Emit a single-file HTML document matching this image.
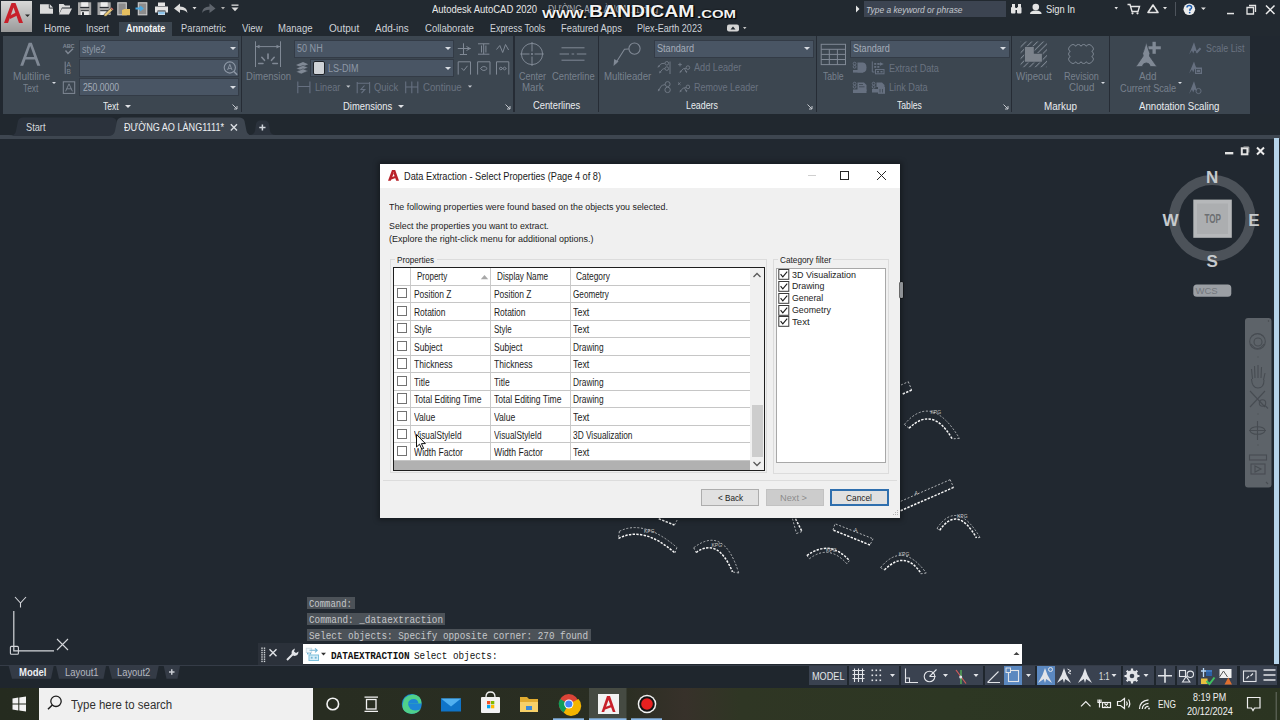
<!DOCTYPE html>
<html><head><meta charset="utf-8">
<style>
*{margin:0;padding:0;box-sizing:border-box}
html,body{width:1280px;height:720px;overflow:hidden;background:#212830;font-family:"Liberation Sans",sans-serif;position:relative}
.a{position:absolute;white-space:nowrap;line-height:1}
.sep{top:36px;width:1.5px;height:76px;background:#262c35}
.pdd{position:absolute;width:0;height:0;border-left:3px solid transparent;border-right:3px solid transparent;border-top:3px solid #e0e2e6}
.combo{position:absolute;height:16px;background:#495564;box-shadow:0 0 0 1px #333b46}
.cdd{position:absolute;width:0;height:0;border-left:3.5px solid transparent;border-right:3.5px solid transparent;border-top:3.5px solid #d8dce2}
.cmdbg{position:absolute;height:12px;background:#4c5258}
.sg{position:absolute;top:666px;height:19px;background:#3a4250}
</style></head><body>
<div class="a" style="left:0;top:0;width:1280px;height:36px;background:#222930"></div><div class="a" style="left:1px;top:1px;width:31px;height:31px;background:linear-gradient(#d8d8d8,#9a9a9a);"></div><svg class="a" style="left:1px;top:1px" width="31" height="31" viewBox="0 0 31 31">
<path d="M3 22 L10.5 2 L14.5 2 L22 22 L18 22 L12.5 6.5 L7 22 Z" fill="#c8202a"/>
<path d="M8 15 L16 11 L17.2 14 L9 18 Z" fill="#c8202a"/>
<path d="M24 13.5 L29 13.5 L26.5 16 Z" fill="#2a2a2a"/>
</svg><svg class="a" style="left:38px;top:1px" width="205" height="16" viewBox="38 1 205 16">
<g fill="#dcdcdc">
<path d="M40 4.2 L49.8 4.2 L53 7.6 L53 13.8 L40 13.8 Z"/><path d="M49.3 4.2 L49.3 8.1 L53 8.1" stroke="#222930" stroke-width="0.9" fill="none"/>
<path d="M59 4 L63.5 4 L65 5.5 L70 5.5 L70 7.5 L62 7.5 L59 14 Z"/><path d="M62 8.5 L72 8.5 L69 14.4 L59 14.4 Z"/>
</g>
<path d="M78 2.3 L91.2 2.3 L91.2 15 L78 15 Z" fill="#a6a6a6"/>
<rect x="81.2" y="2.3" width="7" height="4.6" fill="#ececec"/><rect x="80.2" y="6.9" width="9" height="1.2" fill="#2a2e34"/>
<rect x="80.8" y="11" width="8" height="4" fill="#ececec"/><rect x="80.8" y="10.2" width="8" height="1" fill="#2a2e34"/><rect x="82" y="12.2" width="2" height="2.8" fill="#2a2e34"/>
<path d="M97.5 2.3 L110.7 2.3 L110.7 15 L97.5 15 Z" fill="#a6a6a6"/>
<rect x="100.7" y="2.3" width="7" height="4.6" fill="#ececec"/><rect x="99.7" y="6.9" width="9" height="1.2" fill="#2a2e34"/>
<rect x="100.3" y="11" width="6" height="4" fill="#ececec"/><rect x="100.3" y="10.2" width="8" height="1" fill="#2a2e34"/>
<path d="M104 14.5 L110.5 8.3 L112.6 10.3 L106.2 16.3 L104 16.3 Z" fill="#e8c878" stroke="#222930" stroke-width="0.6"/><path d="M110.5 8.3 L112.6 10.3 L113.5 9.3 L111.4 7.4 Z" fill="#e07a6a"/>
<rect x="117.8" y="2.8" width="8.5" height="12" fill="#8c8c8c" stroke="#d0d0d0" stroke-width="1.1"/>
<path d="M122 10 L124.5 9 L130 9 L130 15.3 L122 15.3 Z" fill="#e6c060"/>
<rect x="138.3" y="2.8" width="8.5" height="12" fill="#8c8c8c" stroke="#d0d0d0" stroke-width="1.1"/>
<path d="M135.5 8.5 L142 8.5 M140 6.5 L142.5 8.5 L140 10.5" stroke="#4aa8e0" stroke-width="1.8" fill="none"/>
<path d="M158 2.5 L165 2.5 L165 6 L158 6 Z M155 6.5 L168 6.5 L168 12.5 L165.5 12.5 L165.5 10.5 L157.5 10.5 L157.5 12.5 L155 12.5 Z M158 11.5 L165 11.5 L165 15 L158 15 Z" fill="#e4e4e4"/><rect x="158.3" y="11.8" width="6.4" height="2.6" fill="#8cc4ec"/>
<path d="M174 8.5 L180 3.5 L180 6.5 Q187 6.5 187.5 13 Q185 9.8 180 9.8 L180 13 Z" fill="#dcdcdc"/>
<path d="M192.5 7 L196.5 7 L194.5 9.5 Z" fill="#dcdcdc"/>
<path d="M215.5 8.5 L209.5 3.5 L209.5 6.5 Q202.5 6.5 202 13 Q204.5 9.8 209.5 9.8 L209.5 13 Z" fill="#5e646c"/>
<path d="M221 7 L225 7 L223 9.5 Z" fill="#b0b0b0"/>
<rect x="231.5" y="4.5" width="7" height="1.3" fill="#dcdcdc"/><path d="M231.5 7.5 L238.5 7.5 L235 11.2 Z" fill="#dcdcdc"/>
</svg><div class="a" style="left:432.00px;top:4.12px;font-size:10.5px;color:#e8e8e8;transform:scaleX(0.9038);transform-origin:0 0;">Autodesk AutoCAD 2020</div>
<div class="a" style="left:548.00px;top:4.12px;font-size:10.5px;color:#a8acb0;transform:scaleX(0.8238);transform-origin:0 0;">ĐƯỜNG AO LÀNG1111.dwg</div>
<div class="a" style="left:541.5px;top:9.2px;font-size:11.5px;font-weight:bold;color:#f2f2f2;text-shadow:0 0 1.5px #000,1px 1px 1px #000;transform:scaleX(1.2811);transform-origin:0 0;">WWW.</div><div class="a" style="left:588.5px;top:4.4px;font-size:16.8px;font-weight:bold;color:#f2f2f2;text-shadow:0 0 1.5px #000,1px 1px 1px #000;transform:scaleX(1.1548);transform-origin:0 0;">BANDICAM</div><div class="a" style="left:696.5px;top:9.2px;font-size:11.5px;font-weight:bold;color:#f2f2f2;text-shadow:0 0 1.5px #000,1px 1px 1px #000;transform:scaleX(1.2986);transform-origin:0 0;">.COM</div><svg class="a" style="left:855px;top:5px" width="6" height="8" viewBox="0 0 6 8"><path d="M1 0.5 L4.5 4 L1 7.5 Z" fill="#e4e4e4"/></svg><div class="a" style="left:864px;top:1px;width:142px;height:16px;background:#3c4451"></div><div class="a" style="left:866.00px;top:4.78px;font-size:9.5px;color:#c4c8ce;font-style:italic;transform:scaleX(0.8843);transform-origin:0 0;">Type a keyword or phrase</div>
<svg class="a" style="left:1005px;top:0px" width="275" height="18" viewBox="1005 0 275 18">
<g fill="#e4e4e4">
<rect x="1011" y="7" width="4.5" height="6.5" rx="1"/><rect x="1017" y="7" width="4.5" height="6.5" rx="1"/><rect x="1012" y="4" width="3" height="4"/><rect x="1018" y="4" width="3" height="4"/><rect x="1014.5" y="8" width="3" height="2"/>
<circle cx="1035.8" cy="7" r="3.3"/><path d="M1030 14 Q1030 10.5 1035.8 10.5 Q1041.6 10.5 1041.6 14 Z"/>
<path d="M1114.5 7 L1118 7 L1116.2 9.5 Z"/>
<path d="M1163 7 L1167 7 L1165 9.5 Z"/>
<path d="M1201 7.5 L1205.8 7.5 L1203.4 10 Z"/>
<rect x="1227" y="12.8" width="7" height="1.5"/>
</g>
<path d="M1127.5 4.5 L1130 4.5 L1132 11.5 L1138 11.5 L1139.5 6.5 L1131 6.5" stroke="#e4e4e4" stroke-width="1.4" fill="none"/>
<circle cx="1132.5" cy="13.3" r="1.1" fill="#e4e4e4"/><circle cx="1137.5" cy="13.3" r="1.1" fill="#e4e4e4"/>
<path d="M1148 12.5 L1153 5 L1158 12.5 Z" stroke="#e4e4e4" stroke-width="1.6" fill="none" stroke-linejoin="round"/>
<rect x="1175" y="2" width="1" height="14" fill="#4e545c"/>
<circle cx="1189.3" cy="9.3" r="5.8" fill="#ececec"/>
<path d="M1187 7.5 Q1187 5.5 1189.3 5.5 Q1191.6 5.5 1191.6 7.4 Q1191.6 8.6 1190 9.3 L1189.8 10.8" stroke="#1f5fb0" stroke-width="1.5" fill="none"/><circle cx="1189.7" cy="12.6" r="0.9" fill="#1f5fb0"/>
<path d="M1247 7.5 L1253.5 7.5 L1253.5 14 L1247 14 Z M1249 5.5 L1255.5 5.5 L1255.5 12" stroke="#e4e4e4" stroke-width="1.3" fill="none"/>
<path d="M1266 5.5 L1274.5 14 M1274.5 5.5 L1266 14" stroke="#ececec" stroke-width="1.5"/>
</svg><div class="a" style="left:1046.30px;top:4.32px;font-size:10.5px;color:#e8e8e8;transform:scaleX(0.8868);transform-origin:0 0;">Sign In</div>
<div class="a" style="left:118.5px;top:21.5px;width:53.5px;height:15px;background:#3c4650"></div><div class="a" style="left:44.00px;top:22.96px;font-size:10.9px;color:#ced2d8;transform:scaleX(0.9049);transform-origin:0 0;">Home</div>
<div class="a" style="left:86.20px;top:22.96px;font-size:10.9px;color:#ced2d8;transform:scaleX(0.8440);transform-origin:0 0;">Insert</div>
<div class="a" style="left:125.60px;top:22.96px;font-size:10.9px;color:#f2f4f6;font-weight:bold;transform:scaleX(0.8347);transform-origin:0 0;">Annotate</div>
<div class="a" style="left:180.70px;top:22.96px;font-size:10.9px;color:#ced2d8;transform:scaleX(0.8546);transform-origin:0 0;">Parametric</div>
<div class="a" style="left:242.00px;top:22.96px;font-size:10.9px;color:#ced2d8;transform:scaleX(0.8753);transform-origin:0 0;">View</div>
<div class="a" style="left:278.40px;top:22.96px;font-size:10.9px;color:#ced2d8;transform:scaleX(0.8765);transform-origin:0 0;">Manage</div>
<div class="a" style="left:328.60px;top:22.96px;font-size:10.9px;color:#ced2d8;transform:scaleX(0.9235);transform-origin:0 0;">Output</div>
<div class="a" style="left:375.00px;top:22.96px;font-size:10.9px;color:#ced2d8;transform:scaleX(0.9124);transform-origin:0 0;">Add-ins</div>
<div class="a" style="left:424.80px;top:22.96px;font-size:10.9px;color:#ced2d8;transform:scaleX(0.8779);transform-origin:0 0;">Collaborate</div>
<div class="a" style="left:489.50px;top:22.96px;font-size:10.9px;color:#ced2d8;transform:scaleX(0.8181);transform-origin:0 0;">Express Tools</div>
<div class="a" style="left:560.60px;top:22.96px;font-size:10.9px;color:#ced2d8;transform:scaleX(0.8596);transform-origin:0 0;">Featured Apps</div>
<div class="a" style="left:637.30px;top:22.96px;font-size:10.9px;color:#ced2d8;transform:scaleX(0.8322);transform-origin:0 0;">Plex-Earth 2023</div>
<svg class="a" style="left:726px;top:22px" width="22" height="12" viewBox="726 22 22 12">
<rect x="727" y="24.5" width="12" height="7" rx="2" fill="#d4d4d4"/><path d="M730.5 29.5 L733 26.5 L735.5 29.5 Z" fill="#222930"/>
<path d="M743 27 L746.5 27 L744.7 29.3 Z" fill="#c4c4c4"/>
</svg><div class="a" style="left:3px;top:36px;width:1247px;height:77.5px;background:#3c4650"></div><div class="a sep" style="left:240.5px"></div><div class="a sep" style="left:513px"></div><div class="a sep" style="left:597.5px"></div><div class="a sep" style="left:815.5px"></div><div class="a sep" style="left:1010.5px"></div><div class="a sep" style="left:1108.5px"></div><svg class="a" style="left:18px;top:41px" width="26" height="28" viewBox="18 41 26 28">
<path d="M20.2 65.7 L28.7 42.8 L31.8 42.8 L40.3 65.7 L37.3 65.7 L35 59.4 L25.5 59.4 L23.2 65.7 Z M26.3 56.9 L34.2 56.9 L30.25 46 Z" fill="#808995"/>
</svg><div class="a" style="left:12.60px;top:71.50px;font-size:10px;color:#78818d;transform:scaleX(1.0112);transform-origin:0 0;">Multiline</div>
<div class="a" style="left:23.40px;top:83.60px;font-size:10px;color:#78818d;transform:scaleX(0.8395);transform-origin:0 0;">Text</div>
<div class="a pdd" style="left:52.3px;top:82.2px;border-left-width:2px;border-right-width:2px;border-top-width:2.5px;border-top-color:#d8dce2"></div><svg class="a" style="left:60px;top:41px" width="18" height="56" viewBox="60 41 18 56">
<text x="62.8" y="47.6" font-family="Liberation Sans" font-weight="bold" font-size="5.6" fill="#808995" textLength="11.8">ABC</text>
<path d="M65.5 50.5 L68 53.5 L73 48.8" stroke="#808995" stroke-width="1.4" fill="none"/>
<path d="M65.2 61.6 L65.2 73.8" stroke="#808995" stroke-width="1"/>
<text x="66.5" y="67.2" font-family="Liberation Sans" font-size="6.6" fill="#808995">A</text>
<text x="66.5" y="73.8" font-family="Liberation Sans" font-size="6.6" fill="#808995">B</text>
<rect x="63.3" y="81.8" width="11.4" height="11.6" fill="none" stroke="#808995" stroke-width="1"/>
<path d="M65.6 91.3 L69 83.8 L72.4 91.3 M66.6 88.8 L71.4 88.8" stroke="#808995" stroke-width="0.9" fill="none"/>
</svg><div class="combo" style="left:80px;top:41px;width:158px"></div><div class="combo" style="left:80px;top:60.2px;width:158px;height:15.8px"></div><div class="combo" style="left:80px;top:79px;width:158px"></div><div class="cdd" style="left:230px;top:47.3px"></div><div class="cdd" style="left:230px;top:85.8px"></div><div class="a" style="left:82.00px;top:44.50px;font-size:10px;color:#8e98a6;transform:scaleX(0.9033);transform-origin:0 0;">style2</div>
<div class="a" style="left:82.50px;top:82.70px;font-size:10px;color:#a4acb8;transform:scaleX(0.8629);transform-origin:0 0;">250.0000</div>
<svg class="a" style="left:222px;top:60px" width="17" height="17" viewBox="222 60 17 17">
<circle cx="229.8" cy="67.5" r="5.6" fill="none" stroke="#8e98a6" stroke-width="1.1"/>
<path d="M233.8 71.5 L237.2 74.8" stroke="#8e98a6" stroke-width="1.6"/>
<path d="M227.6 70 L229.8 64.3 L232 70 M228.3 68.4 L231.3 68.4" stroke="#8e98a6" stroke-width="0.9" fill="none"/>
</svg><div class="a" style="left:103.00px;top:101.60px;font-size:10px;color:#eaecef;transform:scaleX(0.8559);transform-origin:0 0;">Text</div>
<div class="a pdd" style="left:124.5px;top:104.7px;border-left-width:3px;border-right-width:3px;border-top-width:3px"></div><svg class="a" style="left:232px;top:104px" width="6" height="6" viewBox="0 0 6 6"><path d="M0.5 0.5 L5 5 M5 2 L5 5 L2 5" stroke="#c4c8ce" stroke-width="1" fill="none"/></svg><svg class="a" style="left:253px;top:40px" width="30" height="29" viewBox="253 40 30 29">
<g stroke="#808995" stroke-width="1" fill="none"><path d="M255.5 41.3 L255.5 67 M280.5 41.3 L280.5 67 M256 46.6 L280 46.6"/></g>
<g fill="#808995"><path d="M256 46.6 L259.5 44.8 L259.5 48.4 Z M280 46.6 L276.5 44.8 L276.5 48.4 Z"/></g>
<g stroke="#808995" stroke-linecap="round" fill="none">
<path d="M268 54 L268 58.5" stroke-width="1.7"/>
<path d="M261.8 57.3 L264.5 60.3" stroke-width="1.6"/><path d="M274.2 57.3 L271.5 60.3" stroke-width="1.6"/>
<path d="M258.6 63.6 L263 63.6" stroke-width="1.5"/><path d="M272.8 63.6 L277.4 63.6" stroke-width="1.5"/>
</g>
</svg><div class="a" style="left:245.90px;top:71.60px;font-size:10px;color:#78818d;transform:scaleX(0.9545);transform-origin:0 0;">Dimension</div>
<div class="combo" style="left:295px;top:41px;width:158.3px"></div><div class="combo" style="left:310.7px;top:60.1px;width:142.6px;height:15.6px"></div><div class="cdd" style="left:444.5px;top:47.3px"></div><div class="cdd" style="left:444.5px;top:66.5px"></div><div class="a" style="left:297.30px;top:44.40px;font-size:10px;color:#8e98a6;transform:scaleX(0.9062);transform-origin:0 0;">50 NH</div>
<div class="a" style="left:313.3px;top:61.4px;width:12px;height:13.2px;background:#cfd2d6;border:1px solid #1e2228;border-radius:2px"></div><div class="a" style="left:327.50px;top:63.80px;font-size:10px;color:#8e98a6;transform:scaleX(0.9025);transform-origin:0 0;">LS-DIM</div>
<svg class="a" style="left:295px;top:61px" width="14" height="14" viewBox="295 61 14 14">
<g fill="#808995"><path d="M296 65 L303 62 L308.2 64.2 L301.2 67.2 Z"/><path d="M296 68.4 L303 65.4 L308.2 67.6 L301.2 70.6 Z" stroke="#3c4650" stroke-width="0.6"/><path d="M296 71.8 L303 68.8 L308.2 71 L301.2 74 Z" stroke="#3c4650" stroke-width="0.6"/></g>
</svg><svg class="a" style="left:296px;top:80px" width="180" height="16" viewBox="296 80 180 16">
<g stroke="#667080" stroke-width="1.1" fill="none">
<path d="M297.8 81.6 L297.8 93.2 M309.9 81.6 L309.9 93.2 M297.8 86.5 L309.9 86.5"/>
<path d="M357.2 82 L357.2 93.2 M369.6 82 L369.6 93.2 M357.2 83.2 L369.6 83.2"/><path d="M364.5 85.5 L361 89.5 L364.8 89.5 L361.5 93"/>
<path d="M405.7 81.6 L405.7 93.2 M411.8 81.6 L411.8 93.2 M417.8 81.6 L417.8 93.2 M405.7 87 L417.8 87"/>
</g>
<path d="M346.2 85.4 L350.4 85.4 L348.3 87.8 Z M467.9 85.4 L472.1 85.4 L470 87.8 Z" fill="#c4c8ce"/>
</svg><div class="a" style="left:314.80px;top:82.50px;font-size:10px;color:#6a7380;transform:scaleX(0.9133);transform-origin:0 0;">Linear</div>
<div class="a" style="left:373.90px;top:82.50px;font-size:10px;color:#6a7380;transform:scaleX(0.9428);transform-origin:0 0;">Quick</div>
<div class="a" style="left:422.70px;top:82.50px;font-size:10px;color:#6a7380;transform:scaleX(0.9667);transform-origin:0 0;">Continue</div>
<svg class="a" style="left:456px;top:41px" width="56" height="36" viewBox="456 41 56 36">
<g stroke="#808995" stroke-width="1" fill="none">
<path d="M463.5 43.3 L463.5 55 M459.8 54.5 L467 54.5 M457.8 48.5 L470.8 48.5 M466.5 46.5 L470 48.5 L466.5 50.5"/>
<path d="M478 43.8 L489.4 43.8 M478 54.2 L489.4 54.2 M483.7 43.8 L483.7 54.2 M481.5 45.5 L481.5 52.5 M485.9 45.5 L485.9 52.5"/>
<path d="M496.5 49.5 L499.8 45.5 L502.7 52.5 L505.5 44.5 L508.6 50"/>
<path d="M458.2 74.6 L458.2 61.8 L470.5 61.8 L470.5 74.6 M461.5 68 L463.8 70.5 L467.5 65.8"/>
<path d="M477.6 74.6 L477.6 61.8 L490 61.8 L490 74.6 M480.5 68.5 Q483.8 64.5 487.2 68.5 Q483.8 72.5 480.5 68.5"/>
<path d="M496.5 74.6 L496.5 61.8 L508.8 61.8 L508.8 74.6 M499 68.5 Q500.8 65.8 502.7 68.5 Q504.6 71.2 506.4 68.5 Q504.6 65.8 502.7 68.5 Q500.8 71.2 499 68.5"/>
</g>
</svg><div class="a" style="left:342.80px;top:101.50px;font-size:10px;color:#eaecef;transform:scaleX(0.9416);transform-origin:0 0;">Dimensions</div>
<div class="a pdd" style="left:397.5px;top:104.6px"></div><svg class="a" style="left:505px;top:104px" width="6" height="6" viewBox="0 0 6 6"><path d="M0.5 0.5 L5 5 M5 2 L5 5 L2 5" stroke="#c4c8ce" stroke-width="1" fill="none"/></svg><svg class="a" style="left:518px;top:41px" width="72" height="27" viewBox="518 41 72 27">
<g stroke="#808995" stroke-width="1" fill="none">
<circle cx="532" cy="54" r="10.6"/><path d="M532 42 L532 51.5 M532 56.5 L532 66 M520.2 54 L529.5 54 M534.5 54 L543.8 54"/>
<path d="M561.5 47.8 L584.5 47.8 M561.5 60.2 L584.5 60.2 M559.6 54 L569 54 M571.6 54 L574.2 54 M576.8 54 L586.3 54"/>
</g><circle cx="532" cy="54" r="1.1" fill="#808995"/>
</svg><div class="a" style="left:519.20px;top:71.90px;font-size:10px;color:#78818d;transform:scaleX(0.9029);transform-origin:0 0;">Center</div>
<div class="a" style="left:521.60px;top:82.80px;font-size:10px;color:#78818d;transform:scaleX(0.9715);transform-origin:0 0;">Mark</div>
<div class="a" style="left:551.70px;top:71.90px;font-size:10px;color:#78818d;transform:scaleX(0.9343);transform-origin:0 0;">Centerline</div>
<div class="a" style="left:533.00px;top:101.10px;font-size:10px;color:#eaecef;transform:scaleX(0.9329);transform-origin:0 0;">Centerlines</div>
<svg class="a" style="left:610px;top:41px" width="34" height="27" viewBox="610 41 34 27">
<g stroke="#808995" stroke-width="1.1" fill="none"><circle cx="634.5" cy="48.6" r="5.6"/><path d="M628.9 49 L624.5 49.2 L615.6 63.2"/></g>
<path d="M613.5 66 L614.2 59 L618.6 61.6 Z" fill="#808995"/>
</svg><div class="a" style="left:603.70px;top:71.90px;font-size:10px;color:#78818d;transform:scaleX(0.9668);transform-origin:0 0;">Multileader</div>
<div class="combo" style="left:655.3px;top:41.2px;width:157.9px;height:15.8px"></div><div class="cdd" style="left:804.3px;top:47.3px"></div><div class="a" style="left:657.00px;top:44.40px;font-size:10px;color:#a4acb8;transform:scaleX(0.9115);transform-origin:0 0;">Standard</div>
<svg class="a" style="left:654px;top:59px" width="40" height="36" viewBox="654 59 40 36">
<g fill="none" stroke="#6f7884" stroke-width="1">
<path d="M658.8 66.5 L660.6 64.2 Q661.4 63.3 664.8 63.3"/><circle cx="666.8" cy="63.3" r="1.8"/>
<path d="M660.3 72 L662.4 69.4 Q663.2 68.6 665 68.6"/><circle cx="666.8" cy="68.6" r="1.8"/>
<path d="M670 61.5 L670 74"/>
<path d="M678.2 64.6 L681.8 64.6 M680 62.8 L680 66.4"/>
<path d="M686.1 68.3 Q683 67.6 680.6 71.6 M684.6 68.9 L686.3 71.8"/><circle cx="687.9" cy="67.6" r="1.8"/>
<path d="M658.8 90.3 L661 86.3 Q661.8 85.2 665 84.6"/><circle cx="667.6" cy="84.1" r="2.5"/><circle cx="667.6" cy="89.9" r="2.7"/>
<path d="M678 82.5 L680.5 84.8 M680.5 82.5 L678 84.8"/>
<path d="M686.1 87.6 Q683 86.9 680.6 90.9 M684.6 88.2 L686.3 91.1"/><circle cx="687.9" cy="86.9" r="1.8"/>
</g>
<g fill="#6f7884">
<path d="M657.5 67.8 L658.2 65.2 L660 66.6 Z"/><path d="M659 73.4 L659.7 70.8 L661.5 72.2 Z"/>
<path d="M679.6 73.2 L680 70.6 L682 71.6 Z"/><path d="M686.8 73.2 L685 71.3 L687.3 70.8 Z"/>
<path d="M657.8 91.6 L658.2 88.8 L660.2 90 Z"/>
<path d="M679.6 92.5 L680 89.9 L682 90.9 Z"/><path d="M686.8 92.5 L685 90.6 L687.3 90.1 Z"/>
</g>
</svg><div class="a" style="left:694.00px;top:63.40px;font-size:10px;color:#6a7380;transform:scaleX(0.9146);transform-origin:0 0;">Add Leader</div>
<div class="a" style="left:694.00px;top:82.80px;font-size:10px;color:#6a7380;transform:scaleX(0.9022);transform-origin:0 0;">Remove Leader</div>
<div class="a" style="left:686.30px;top:101.10px;font-size:10px;color:#eaecef;transform:scaleX(0.8854);transform-origin:0 0;">Leaders</div>
<svg class="a" style="left:807.4px;top:104px" width="6" height="6" viewBox="0 0 6 6"><path d="M0.5 0.5 L5 5 M5 2 L5 5 L2 5" stroke="#c4c8ce" stroke-width="1" fill="none"/></svg><svg class="a" style="left:819px;top:42px" width="29" height="25" viewBox="819 42 29 25">
<g stroke="#808995" stroke-width="1" fill="none"><rect x="821.2" y="44.3" width="24.3" height="20.3"/><path d="M821.2 49.3 L845.5 49.3 M821.2 54.4 L845.5 54.4 M821.2 59.5 L845.5 59.5 M829.3 49.3 L829.3 64.6 M837.4 49.3 L837.4 64.6"/></g>
</svg><div class="a" style="left:823.40px;top:71.50px;font-size:10px;color:#78818d;transform:scaleX(0.8617);transform-origin:0 0;">Table</div>
<div class="combo" style="left:850.7px;top:41px;width:158.3px;height:15.8px"></div><div class="cdd" style="left:1000.3px;top:47.3px"></div><div class="a" style="left:852.50px;top:44.40px;font-size:10px;color:#a4acb8;transform:scaleX(0.9090);transform-origin:0 0;">Standard</div>
<svg class="a" style="left:851px;top:60px" width="36" height="35" viewBox="851 60 36 35">
<g fill="none" stroke="#667080" stroke-width="1">
<circle cx="854.6" cy="63.6" r="1.4"/><circle cx="854.6" cy="66.8" r="1.4"/>
<path d="M872.3 61.5 L872.3 72 L874.5 72"/>
<rect x="875.5" y="69.5" width="8.5" height="4.3"/>
<circle cx="854.6" cy="83.6" r="1.4"/><circle cx="854.6" cy="86.8" r="1.4"/>
<circle cx="873.6" cy="83.6" r="1.4"/><circle cx="873.6" cy="86.8" r="1.4"/>
</g>
<g fill="#667080">
<path d="M857.5 62.5 L863 62.5 Q866.5 63 866.5 67.5 Q866.5 72 863 72.5 L857.5 72.5 Z"/>
<rect x="853" y="70" width="10" height="2.6"/>
<rect x="874.2" y="63" width="2" height="1.8"/><rect x="877.3" y="63" width="2" height="1.8"/><rect x="874.2" y="66" width="2" height="1.8"/><rect x="877.3" y="66" width="2" height="1.8"/>
<path d="M880 62.3 L883.8 64 L880 65.7 Z"/><rect x="878" y="63.5" width="2.5" height="1"/>
<rect x="877" y="71" width="2" height="1.5"/><rect x="880.5" y="71" width="2" height="1.5"/>
<path d="M857.5 82.5 L864 82.5 L866.5 85 L866.5 91 L857.5 91 Z"/><rect x="853" y="89.5" width="13.5" height="3.5"/>
<path d="M876.5 82.5 L882 82.5 L884.5 85 L884.5 87 L876.5 87 Z"/><rect x="872" y="89" width="6" height="3.5"/><rect x="878" y="87" width="7" height="6.8"/>
</g>
<path d="M859 84.5 L863 84.5 M859 86.8 L864.5 86.8" stroke="#3c4650" stroke-width="0.8"/>
<path d="M880 89 L880 92.5 M882.5 89 L882.5 92.5" stroke="#3c4650" stroke-width="0.8"/>
</svg><div class="a" style="left:889.00px;top:63.60px;font-size:10px;color:#6a7380;transform:scaleX(0.9068);transform-origin:0 0;">Extract Data</div>
<div class="a" style="left:889.00px;top:83.00px;font-size:10px;color:#6a7380;transform:scaleX(0.9160);transform-origin:0 0;">Link Data</div>
<div class="a" style="left:896.80px;top:101.40px;font-size:10px;color:#eaecef;transform:scaleX(0.8614);transform-origin:0 0;">Tables</div>
<svg class="a" style="left:1003.4px;top:104px" width="6" height="6" viewBox="0 0 6 6"><path d="M0.5 0.5 L5 5 M5 2 L5 5 L2 5" stroke="#c4c8ce" stroke-width="1" fill="none"/></svg><svg class="a" style="left:1018px;top:40px" width="80" height="30" viewBox="1018 40 80 30">
<defs><pattern id="htch" width="4.1" height="4.1" patternUnits="userSpaceOnUse" patternTransform="rotate(45)"><rect width="0.95" height="4.1" fill="#7c8590"/></pattern></defs>
<rect x="1020.6" y="41.5" width="26.4" height="25.7" fill="url(#htch)"/>
<path d="M1025 47 L1033.8 47 L1033.8 53.8 L1041.9 53.8 L1041.9 61.8 L1025 61.8 Z" fill="#7c838c" stroke="#3c4650" stroke-width="1.6" paint-order="stroke"/>
<path d="M1070.3 46.3 A2.88 2.88 0 0 1 1075.65 46.3 A2.88 2.88 0 0 1 1081.00 46.3 A2.88 2.88 0 0 1 1086.35 46.3 A2.88 2.88 0 0 1 1091.70 46.3 A2.77 2.77 0 0 1 1091.7 51.43 A2.77 2.77 0 0 1 1091.7 56.57 A2.77 2.77 0 0 1 1091.7 61.70 A2.88 2.88 0 0 1 1086.35 61.7 A2.88 2.88 0 0 1 1081.00 61.7 A2.88 2.88 0 0 1 1075.65 61.7 A2.88 2.88 0 0 1 1070.30 61.7 A2.77 2.77 0 0 1 1070.3 56.57 A2.77 2.77 0 0 1 1070.3 51.43 A2.77 2.77 0 0 1 1070.3 46.30 Z" fill="none" stroke="#808995" stroke-width="0.95"/>
</svg><div class="a" style="left:1016.30px;top:71.90px;font-size:10px;color:#78818d;transform:scaleX(0.9704);transform-origin:0 0;">Wipeout</div>
<div class="a" style="left:1063.60px;top:71.90px;font-size:10px;color:#78818d;transform:scaleX(0.9072);transform-origin:0 0;">Revision</div>
<div class="a" style="left:1068.50px;top:83.10px;font-size:10px;color:#78818d;transform:scaleX(0.9717);transform-origin:0 0;">Cloud</div>
<div class="a pdd" style="left:1100.7px;top:81.9px;border-left-width:2px;border-right-width:2px;border-top-width:2.5px;border-top-color:#d8dce2"></div><div class="a" style="left:1044.00px;top:101.60px;font-size:10px;color:#eaecef;transform:scaleX(0.9862);transform-origin:0 0;">Markup</div>
<svg class="a" style="left:1133px;top:40px" width="30" height="30" viewBox="1133 40 30 30">
<rect x="1148.3" y="46.3" width="12.5" height="3" fill="#808995"/><rect x="1152.5" y="41.8" width="3.3" height="12" fill="#808995"/>
<path d="M1146.3 42.2 L1148.8 50.5 Q1150.8 53.5 1149.4 56 L1157 66.8 L1150.3 66.5 A4.1 4.6 0 0 0 1142.3 66.5 L1135.8 66.8 L1143.2 56 Q1141.8 53.5 1143.8 50.5 Z" fill="#808995" stroke="#3c4650" stroke-width="0.8"/>
</svg><div class="a" style="left:1139.40px;top:71.90px;font-size:10px;color:#78818d;transform:scaleX(0.9889);transform-origin:0 0;">Add</div>
<div class="a" style="left:1120.20px;top:83.60px;font-size:10px;color:#78818d;transform:scaleX(0.9176);transform-origin:0 0;">Current Scale</div>
<div class="a pdd" style="left:1178.4px;top:82.3px;border-left-width:2px;border-right-width:2px;border-top-width:2.5px;border-top-color:#d8dce2"></div><svg class="a" style="left:1187px;top:41px" width="16" height="55" viewBox="1187 41 16 55">
<g fill="#667080">
<path d="M1194 42.3 L1195.5 47 L1197 52 L1194.5 50.5 L1193.2 53.5 L1192 50.5 L1189 54.5 L1191.5 48.5 Z"/><path d="M1195.5 52 L1199.8 47.5 L1201.3 49 L1197 53.5 Z"/>
<path d="M1194 61.4 L1195.5 66 L1196.5 68 L1194.5 69 L1193.2 72.5 L1192 69.5 L1189 73.5 L1191.5 67.5 Z"/><rect x="1195" y="67.5" width="7" height="6.5"/>
<path d="M1194 81.3 L1195.5 86 L1197 91 L1194.5 89.5 L1193.2 92.5 L1192 89.5 L1189 94 L1191.5 87.5 Z"/>
</g>
<rect x="1196.5" y="69.5" width="4" height="3" fill="none" stroke="#3c4650" stroke-width="0.7"/>
<circle cx="1198.5" cy="91" r="2.6" fill="none" stroke="#667080" stroke-width="0.9"/>
</svg><div class="a" style="left:1205.80px;top:44.00px;font-size:10px;color:#6a7380;transform:scaleX(0.8879);transform-origin:0 0;">Scale List</div>
<div class="a" style="left:1139.40px;top:101.60px;font-size:10px;color:#eaecef;transform:scaleX(0.9640);transform-origin:0 0;">Annotation Scaling</div>
<div class="a" style="left:0;top:113.5px;width:1280px;height:21.5px;background:#21282f"></div><div class="a" style="left:0;top:135px;width:1280px;height:3.7px;background:#3e4650"></div><svg class="a" style="left:0;top:113px" width="280" height="25" viewBox="0 113 280 25">
<path d="M9 136 Q15 136 16 131 L18 121 Q19 117.5 23 117.5 L111 117.5 Q115.5 117.5 116.5 121 L118.5 131 Q119.5 136 126 136 Z" fill="#2b323c"/>
<path d="M108 136 Q114 136 115 131 L117 121 Q118 117.5 122 117.5 L239 117.5 Q243.5 117.5 244.5 121 L246.5 131 Q247.5 136 255 136 Z" fill="#3e4650"/>
<path d="M249 135 Q254 135 255 131 L256 124 Q257 120.5 260 120.5 L265 120.5 Q268 120.5 269 124 L270 131 Q271 135 276 135 Z" fill="#2b323c"/>
<path d="M259.3 127.5 L265.5 127.5 M262.4 124.5 L262.4 130.5" stroke="#d0d4da" stroke-width="1.5"/>
<path d="M230.8 124.2 L237 130.4 M237 124.2 L230.8 130.4" stroke="#dadde2" stroke-width="1.4"/>
</svg><div class="a" style="left:25.50px;top:121.79px;font-size:11.3px;color:#d6dade;transform:scaleX(0.8173);transform-origin:0 0;">Start</div>
<div class="a" style="left:123.80px;top:121.79px;font-size:11.3px;color:#eceef2;transform:scaleX(0.8051);transform-origin:0 0;">ĐƯỜNG AO LÀNG1111*</div>
<div class="a" style="left:0;top:138.7px;width:1280px;height:526.3px;background:#212830"></div><div class="a" style="left:1274px;top:138px;width:5px;height:526px;background:#b6d4ea"></div><svg class="a" style="left:1220px;top:140px" width="50" height="20" viewBox="1220 140 50 20">
<rect x="1225" y="152" width="8.3" height="2.4" fill="#e2e2e2"/>
<rect x="1241.8" y="148.3" width="5.6" height="6" fill="none" stroke="#e2e2e2" stroke-width="2"/><path d="M1243.5 147 L1248.8 147 L1248.8 152.5" stroke="#b8b8b8" stroke-width="1" fill="none"/>
<path d="M1257 147.5 L1264 154.5 M1264 147.5 L1257 154.5" stroke="#ececec" stroke-width="2"/>
</svg><svg class="a" style="left:1160px;top:166px" width="104" height="134" viewBox="1160 166 104 134">
<circle cx="1212.2" cy="218.2" r="38.2" fill="none" stroke="#4c5259" stroke-width="10"/>
<rect x="1193.3" y="199.6" width="38.5" height="38.2" fill="#b6b8ba"/>
<rect x="1197" y="203.5" width="31" height="30.5" fill="#acaeb0"/>
<g font-family="Liberation Sans" font-weight="bold" fill="#c6cacd" text-anchor="middle">
<text x="1212.2" y="183.4" font-size="17" textLength="11">N</text><text x="1212.2" y="266.5" font-size="17" textLength="10.5">S</text><text x="1170.5" y="225.5" font-size="17" textLength="14.5">W</text><text x="1253.9" y="225.5" font-size="17" textLength="10">E</text>
</g>
<text x="1212.7" y="222.8" font-family="Liberation Sans" font-weight="bold" font-size="12" fill="#6c6f72" text-anchor="middle" textLength="16.6" lengthAdjust="spacingAndGlyphs">TOP</text>
<rect x="1193.3" y="284.4" width="38" height="12.3" rx="3.5" fill="#9b9fa4"/>
<text x="1195.5" y="294.2" font-family="Liberation Sans" font-size="9.5" fill="#73777c">WCS</text>
</svg><svg class="a" style="left:1244px;top:317px" width="29" height="172" viewBox="1244 317 29 172">
<rect x="1245" y="318" width="26.5" height="169.5" rx="3" fill="#5d6369"/>
<g stroke="#474c52" stroke-width="1.1" fill="none">
<path d="M1268 320.5 L1269 321.5"/>
<circle cx="1257.5" cy="341.5" r="7.8"/><path d="M1252 336 Q1257.5 331 1263 336 M1251 344 Q1257.5 353 1264 344"/><circle cx="1258" cy="342" r="4"/>
<path d="M1257.5 357 L1258.5 357"/>
<path d="M1252.5 379 L1251.5 369 M1255 378 L1254.5 366 M1258 378 L1258 365 M1261 378 L1261.5 367 M1263.5 380 L1265 373 M1251.5 379 Q1252 388 1258 388 Q1264 388 1264 380"/>
<path d="M1250 391 L1265 407 M1265 391 L1250 407"/><circle cx="1262.5" cy="403" r="3.2"/><path d="M1265 405.5 L1268 408.5"/>
<path d="M1257.5 414 L1258.5 414"/>
<path d="M1257.5 421 L1257.5 440 M1249 430.5 L1266 430.5"/><ellipse cx="1257.5" cy="430.5" rx="7.5" ry="3.8"/>
<path d="M1257.5 445 L1258.5 445"/>
<rect x="1249.5" y="455" width="17" height="5"/><rect x="1251" y="464" width="14" height="10"/><path d="M1255 466 L1261 469 L1255 472 Z"/>
<path d="M1266 482 L1268 484"/>
</g>
</svg><svg class="a" style="left:580px;top:370px" width="420" height="215" viewBox="580 370 420 215"><g fill="none"><path d="M901.00 385.00 L908.30 381.70" stroke="#b0b3b6" stroke-width="1" stroke-dasharray="2 1.7"/><path d="M908.30 381.70 L911.70 390.00" stroke="#b0b3b6" stroke-width="1" stroke-dasharray="2 1.7"/><path d="M911.70 390.00 L901.70 394.40" stroke="#f6f6f6" stroke-width="1.5" stroke-dasharray="2.4 1.3"/><path d="M904.40 424.40 Q931.50 392.05 959.40 438.30" stroke="#b0b3b6" stroke-width="1" stroke-dasharray="2 1.7"/><path d="M909.00 428.30 Q932.80 405.20 952.20 438.90" stroke="#f6f6f6" stroke-width="1.5" stroke-dasharray="2.4 1.3"/><path d="M904.40 424.40 L909.00 428.30 M959.40 438.30 L952.20 438.90" stroke="#b0b3b6" stroke-width="1" stroke-dasharray="2 1.7"/><path d="M900.80 501.25 L950.10 479.70" stroke="#b0b3b6" stroke-width="1" stroke-dasharray="2 1.7"/><path d="M950.10 479.70 L953.60 487.40" stroke="#b0b3b6" stroke-width="1" stroke-dasharray="2 1.7"/><path d="M953.60 487.40 L900.00 511.00" stroke="#f6f6f6" stroke-width="1.5" stroke-dasharray="2.4 1.3"/><path d="M937.00 528.30 Q957.10 498.75 980.00 537.40" stroke="#b0b3b6" stroke-width="1" stroke-dasharray="2 1.7"/><path d="M939.70 530.40 Q957.50 504.40 976.50 538.00" stroke="#f6f6f6" stroke-width="1.5" stroke-dasharray="2.4 1.3"/><path d="M937.00 528.30 L939.70 530.40 M980.00 537.40 L976.50 538.00" stroke="#b0b3b6" stroke-width="1" stroke-dasharray="2 1.7"/><path d="M880.60 567.50 Q902.58 540.75 926.25 573.00" stroke="#b0b3b6" stroke-width="1" stroke-dasharray="2 1.7"/><path d="M884.40 570.00 Q905.17 549.12 921.25 573.75" stroke="#f6f6f6" stroke-width="1.5" stroke-dasharray="2.4 1.3"/><path d="M880.60 567.50 L884.40 570.00 M926.25 573.00 L921.25 573.75" stroke="#b0b3b6" stroke-width="1" stroke-dasharray="2 1.7"/><path d="M806.90 555.60 Q829.85 538.90 849.40 560.60" stroke="#f6f6f6" stroke-width="1.5" stroke-dasharray="2.4 1.3"/><path d="M809.40 558.75 Q828.85 543.75 846.90 563.75" stroke="#b0b3b6" stroke-width="1" stroke-dasharray="2 1.7"/><path d="M806.90 555.60 L809.40 558.75 M849.40 560.60 L846.90 563.75" stroke="#b0b3b6" stroke-width="1" stroke-dasharray="2 1.7"/><path d="M833.00 530.00 L835.00 523.75 L873.00 538.75" stroke="#b0b3b6" stroke-width="1" stroke-dasharray="2 1.7"/><path d="M873.00 538.75 L870.00 545.00" stroke="#b0b3b6" stroke-width="1" stroke-dasharray="2 1.7"/><path d="M870.00 545.00 L833.00 530.00" stroke="#f6f6f6" stroke-width="1.5" stroke-dasharray="2.4 1.3"/><path d="M792.50 518.75 L796.50 533.50" stroke="#b0b3b6" stroke-width="1" stroke-dasharray="2 1.7"/><path d="M795.50 518.75 L802.00 531.50" stroke="#f6f6f6" stroke-width="1.5" stroke-dasharray="2.4 1.3"/><path d="M796.50 533.50 L802.00 531.50" stroke="#b0b3b6" stroke-width="1" stroke-dasharray="2 1.7"/><path d="M619.40 531.25 Q643.85 519.03 676.90 547.50" stroke="#b0b3b6" stroke-width="1" stroke-dasharray="2 1.7"/><path d="M618.50 538.50 Q643.25 525.25 675.00 553.00" stroke="#f6f6f6" stroke-width="1.5" stroke-dasharray="2.4 1.3"/><path d="M619.40 531.25 L618.50 538.50 M676.90 547.50 L675.00 553.00" stroke="#b0b3b6" stroke-width="1" stroke-dasharray="2 1.7"/><path d="M693.75 547.75 Q723.75 524.62 738.75 573.00" stroke="#b0b3b6" stroke-width="1" stroke-dasharray="2 1.7"/><path d="M696.00 552.50 Q717.75 536.80 732.50 571.90" stroke="#f6f6f6" stroke-width="1.5" stroke-dasharray="2.4 1.3"/><path d="M693.75 547.75 L696.00 552.50 M738.75 573.00 L732.50 571.90" stroke="#b0b3b6" stroke-width="1" stroke-dasharray="2 1.7"/><path d="M658.75 518.75 L674.40 525.00" stroke="#f6f6f6" stroke-width="1.5" stroke-dasharray="2.4 1.3"/><path d="M674.40 525.00 L677.50 519.40" stroke="#b0b3b6" stroke-width="1" stroke-dasharray="2 1.7"/><text x="930.5" y="414" font-family="Liberation Sans" font-size="5" fill="#c8c8c8">KPG</text><text x="914.5" y="494.5" font-family="Liberation Sans" font-size="5" fill="#c8c8c8">A</text><text x="957" y="518.2" font-family="Liberation Sans" font-size="5" fill="#c8c8c8">KPG</text><text x="898.75" y="556.3" font-family="Liberation Sans" font-size="5" fill="#c8c8c8">KPG</text><text x="826" y="552" font-family="Liberation Sans" font-size="5" fill="#c8c8c8">KPG</text><text x="854" y="532" font-family="Liberation Sans" font-size="5" fill="#c8c8c8">A</text><text x="644" y="532.5" font-family="Liberation Sans" font-size="5" fill="#c8c8c8">KPG</text><text x="711.5" y="546.5" font-family="Liberation Sans" font-size="5" fill="#c8c8c8">KPG</text></g></svg><svg class="a" style="left:6px;top:594px" width="68" height="64" viewBox="6 594 68 64">
<g stroke="#d4d6da" stroke-width="1.1" fill="none">
<path d="M13.8 611 L13.8 650.8 L54 650.8" stroke-width="1.2"/><rect x="10.4" y="646.4" width="8" height="7.8" rx="1"/>
<path d="M15 597 L20.5 603 L26 597 M20.5 603 L20.5 607.5"/>
<path d="M57 639 L68 650 M68 639 L57 650"/>
</g>
</svg><div class="cmdbg" style="left:307px;top:597px;width:48px;height:11.8px"></div><div class="cmdbg" style="left:307px;top:613px;width:137.5px;height:11.7px"></div><div class="cmdbg" style="left:307px;top:629px;width:284px;height:11.8px"></div><div class="a" style="left:309.00px;top:599.90px;font-size:10px;color:#c6c8cb;font-family:'Liberation Mono',monospace;transform:scaleX(0.8955);transform-origin:0 0;">Command:</div>
<div class="a" style="left:309.00px;top:615.90px;font-size:10px;color:#c6c8cb;font-family:'Liberation Mono',monospace;transform:scaleX(0.9304);transform-origin:0 0;">Command: _dataextraction</div>
<div class="a" style="left:309.00px;top:631.90px;font-size:10px;color:#c6c8cb;font-family:'Liberation Mono',monospace;transform:scaleX(0.9298);transform-origin:0 0;">Select objects: Specify opposite corner: 270 found</div>
<div class="a" style="left:257.5px;top:643px;width:45px;height:21.5px;background:#2b313a"></div><svg class="a" style="left:257px;top:643px" width="46" height="22" viewBox="257 643 46 22">
<g fill="#d0d4d8"><rect x="261.3" y="647.5" width="1.4" height="1.4"/><rect x="263.8" y="647.5" width="1.4" height="1.4"/><rect x="261.3" y="649.7" width="1.4" height="1.4"/><rect x="263.8" y="649.7" width="1.4" height="1.4"/><rect x="261.3" y="651.9" width="1.4" height="1.4"/><rect x="263.8" y="651.9" width="1.4" height="1.4"/><rect x="261.3" y="654.1" width="1.4" height="1.4"/><rect x="263.8" y="654.1" width="1.4" height="1.4"/><rect x="261.3" y="656.3" width="1.4" height="1.4"/><rect x="263.8" y="656.3" width="1.4" height="1.4"/><rect x="261.3" y="658.5" width="1.4" height="1.4"/><rect x="263.8" y="658.5" width="1.4" height="1.4"/><rect x="261.3" y="660.7" width="1.4" height="1.4"/><rect x="263.8" y="660.7" width="1.4" height="1.4"/></g>
<path d="M269.5 649.3 L276.5 656.3 M276.5 649.3 L269.5 656.3" stroke="#e2e4e8" stroke-width="1.4"/>
<path d="M287 660 L293 654" stroke="#e2e4e8" stroke-width="2"/>
<path d="M292 655 Q290.5 650.5 294 649 L295 648.5 L294 651.5 L296 653 L298.5 651.5 Q298.5 655.5 294.5 656 Z" fill="#e2e4e8"/>
</svg><div class="a" style="left:302.5px;top:644px;width:719.5px;height:19.8px;background:#ffffff"></div><svg class="a" style="left:304px;top:646px" width="26" height="16" viewBox="304 646 26 16">
<rect x="306.2" y="648.2" width="5.5" height="4.4" fill="#eef6fa" stroke="#c8d8e0" stroke-width="0.8"/><rect x="309" y="655" width="9.5" height="5.5" fill="#d6eef8" stroke="#7cc0dc" stroke-width="1"/><path d="M309.5 650.3 L317 650.3 M315 648.3 L317.2 650.3 L315 652.3" stroke="#70b4d4" stroke-width="1.1" fill="none"/>
<g fill="#70b4d4"><rect x="310.8" y="656.8" width="1.8" height="1.8"/><rect x="314.8" y="656.8" width="1.8" height="1.8"/><rect x="307" y="652.8" width="1.6" height="1.6"/><rect x="309.5" y="652.8" width="1.6" height="1.6"/></g>
<path d="M321 652.8 L326 652.8 L323.5 655.5 Z" fill="#333"/>
</svg><div class="a" style="left:331.00px;top:652.00px;font-size:10px;color:#101010;font-family:'Liberation Mono',monospace;transform:scaleX(0.9344);transform-origin:0 0;"><b>DATAEXTRACTION</b></div>
<div class="a" style="left:414.00px;top:652.00px;font-size:10px;color:#101010;font-family:'Liberation Mono',monospace;transform:scaleX(0.9276);transform-origin:0 0;">Select objects:</div>
<svg class="a" style="left:1012px;top:649.5px" width="9" height="8" viewBox="0 0 9 8"><path d="M1.5 5 L7.5 5 L4.5 2 Z" fill="#444"/></svg><div class="a" style="left:0;top:664.5px;width:1280px;height:23.5px;background:#1f262d"></div><div class="a" style="left:0;top:664.5px;width:1274px;height:1px;background:#353c47"></div><svg class="a" style="left:0;top:664px" width="190" height="18" viewBox="0 664 190 18">
<path d="M8.7 666 L53.7 666 L51 678.8 L12 678.8 Z" fill="#343b46"/>
<path d="M56 666 L106 666 L103.5 678.8 L59 678.8 Z" fill="#343b46"/>
<path d="M108.7 666 L158.7 666 L156 678.8 L112 678.8 Z" fill="#343b46"/>
<path d="M163.7 666 L180 666 L177.5 678.8 L166.5 678.8 Z" fill="#343b46"/>
<path d="M169 672 L174.5 672 M171.75 669.2 L171.75 674.8" stroke="#c8ccd2" stroke-width="1.5"/>
</svg><div class="a" style="left:18.75px;top:667.32px;font-size:10.8px;color:#eceef2;font-weight:bold;transform:scaleX(0.8813);transform-origin:0 0;">Model</div>
<div class="a" style="left:64.50px;top:667.32px;font-size:10.8px;color:#b4b8c0;transform:scaleX(0.8719);transform-origin:0 0;">Layout1</div>
<div class="a" style="left:116.75px;top:667.32px;font-size:10.8px;color:#b4b8c0;transform:scaleX(0.8667);transform-origin:0 0;">Layout2</div>
<div class="sg" style="left:809px;width:37.5px"></div><div class="sg" style="left:849px;width:50px"></div><div class="sg" style="left:901px;width:82px"></div><div class="sg" style="left:985px;width:50px"></div><div class="sg" style="left:1037px;width:84px"></div><div class="sg" style="left:1123px;width:31px"></div><div class="sg" style="left:1155.5px;width:19px"></div><div class="sg" style="left:1177px;width:19px"></div><div class="sg" style="left:1198px;width:39px"></div><div class="sg" style="left:1240px;width:37px"></div><div class="a" style="left:1004px;top:666px;width:18px;height:19px;background:#5b88c0"></div><div class="a" style="left:1037px;top:666px;width:18px;height:19px;background:#5b88c0"></div><div class="a" style="left:811.60px;top:672.05px;font-size:10.3px;color:#e4e6ea;transform:scaleX(0.8874);transform-origin:0 0;">MODEL</div>
<div class="a" style="left:1098.75px;top:670.67px;font-size:10.8px;color:#e0e2e6;transform:scaleX(0.6926);transform-origin:0 0;">1:1</div>
<svg class="a" style="left:849px;top:665px" width="431" height="21" viewBox="849 665 431 21">
<g stroke="#e2e4e8" stroke-width="1.1" fill="none">
<path d="M852.5 670.5 L864.5 670.5 M852.5 674.5 L864.5 674.5 M852.5 678.5 L864.5 678.5 M854.5 668.5 L854.5 682 M858.5 668.5 L858.5 682 M862.5 668.5 L862.5 682"/>
<path d="M905.5 668.5 L905.5 682.5 L918 682.5 M905.5 678 L909.5 678 L909.5 682.5"/>
<circle cx="929.5" cy="676.5" r="5.3"/><path d="M929.5 676.5 L936.5 669.5 M929.5 676.5 L935.5 676.5"/>
<path d="M987.5 682.5 L1000 682.5 M987.5 682.5 L998.5 671.5"/>
<rect x="1008.5" y="670.5" width="10" height="11"/>
<path d="M1158 675.8 L1172 675.8 M1165 668.8 L1165 682.8" stroke-width="1.6"/>
<rect x="1179.5" y="670.5" width="6" height="6"/><circle cx="1190.3" cy="674.3" r="3.2"/><path d="M1182.5 682 L1186.2 676.5 L1189.9 682 Z"/>
<rect x="1243.5" y="671" width="12.5" height="10.5"/><path d="M1246.5 678.5 L1249 676 M1253 673.5 L1250.5 676"/>
</g>
<path d="M1263.5 670 L1275.5 670 M1263.5 675 L1275.5 675 M1263.5 680 L1275.5 680" stroke="#e2e4e8" stroke-width="1.7"/>
<g fill="#e2e4e8">
<rect x="871.5" y="669.5" width="1.6" height="1.6"/><rect x="875.5" y="669.5" width="1.6" height="1.6"/><rect x="879.5" y="669.5" width="1.6" height="1.6"/>
<rect x="871.5" y="674.5" width="1.6" height="1.6"/><rect x="875.5" y="674.5" width="1.6" height="1.6"/><rect x="879.5" y="674.5" width="1.6" height="1.6"/>
<rect x="871.5" y="679.5" width="1.6" height="1.6"/><rect x="875.5" y="679.5" width="1.6" height="1.6"/><rect x="879.5" y="679.5" width="1.6" height="1.6"/>
<path d="M890 674 L895 674 L892.5 677 Z M943 674 L948 674 L945.5 677 Z M973.5 674 L978.5 674 L976 677 Z M1026 674 L1031 674 L1028.5 677 Z M1111.5 674 L1116.5 674 L1114 677 Z M1143.5 674 L1148.5 674 L1146 677 Z"/>
<path d="M1045 668 L1047.5 675 L1052 683 L1046.2 679 L1045 683 L1043.8 679 L1038 683 L1042.5 675 Z"/>
<path d="M1064 668 L1066.5 675 L1071 683 L1065.2 679 L1064 683 L1062.8 679 L1057 683 L1061.5 675 Z"/>
<path d="M1085 668 L1087.5 675 L1092 683 L1086.2 679 L1085 683 L1083.8 679 L1078 683 L1082.5 675 Z"/>
<circle cx="1132" cy="676" r="5.8"/>
<path d="M1132 668.5 L1132 683.5 M1124.5 676 L1139.5 676 M1126.7 670.7 L1137.3 681.3 M1137.3 670.7 L1126.7 681.3" stroke="#e2e4e8" stroke-width="2.2"/>
</g>
<rect x="1006" y="668" width="4.5" height="4.5" fill="#5b88c0" stroke="#e2e4e8" stroke-width="1"/>
<path d="M956 670 L966 683.5" stroke="#d65a5a" stroke-width="1.2"/><path d="M961 670 L961 684" stroke="#58b858" stroke-width="1.3"/>
<circle cx="960.7" cy="677" r="1.5" fill="#e2e4e8"/>
<circle cx="1132" cy="676" r="2.3" fill="#3a4250"/>
<circle cx="1050.5" cy="669.5" r="2" fill="#5b88c0" stroke="#e2e4e8" stroke-width="1"/>
<path d="M1067.5 669 L1071 671 L1068 672.5 L1071 674" stroke="#e2e4e8" stroke-width="1" fill="none"/>
<rect x="1201" y="678.5" width="6.5" height="5.5" fill="#e8c040"/>
<path d="M1201 671 L1212 671 M1203.5 668 L1203.5 677" stroke="#b8d8f8" stroke-width="1.3"/><rect x="1206" y="670" width="6" height="6" fill="#2a68b8" opacity=".8"/>
<path d="M1206.5 681 L1209.5 684 L1214.5 677.5" stroke="#40c060" stroke-width="2" fill="none"/>
<rect x="1219.5" y="669" width="12" height="9" fill="#f0f0f0"/><path d="M1219.5 677 L1223.5 671 L1227.5 677" stroke="#555" fill="none"/>
<path d="M1224.5 684.5 L1228.3 677.5 L1232 684.5 Z" fill="#e07030"/>
</svg><div class="a" style="left:0;top:688px;width:1280px;height:32px;background:linear-gradient(to right,#252b1f 0px,#282d21 320px,#2a2e22 620px,#37312a 685px,#2f3624 740px,#2d3723 950px,#2b3421 1280px)"></div><svg class="a" style="left:10px;top:695px" width="18" height="18" viewBox="10 695 18 18"><path d="M12.5 698.5 L18.3 697.6 L18.3 703.5 L12.5 703.5 Z M19.3 697.4 L26 696.4 L26 703.5 L19.3 703.5 Z M12.5 704.5 L18.3 704.5 L18.3 710.4 L12.5 709.5 Z M19.3 704.5 L26 704.5 L26 711.6 L19.3 710.6 Z" fill="#f2f2f2"/></svg><div class="a" style="left:38.7px;top:688px;width:274.5px;height:32px;background:#f0f0f0"></div><svg class="a" style="left:44px;top:694px" width="20" height="20" viewBox="44 694 20 20"><circle cx="56" cy="701.3" r="5.2" fill="none" stroke="#1c1c1c" stroke-width="1.3"/><path d="M52.3 705 L48 709.3" stroke="#1c1c1c" stroke-width="1.5"/></svg><div class="a" style="left:71.25px;top:698.80px;font-size:12.5px;color:#303030;transform:scaleX(0.9160);transform-origin:0 0;">Type here to search</div>
<svg class="a" style="left:320px;top:688px" width="350" height="32" viewBox="320 688 350 32">
<circle cx="332.8" cy="704" r="5.8" fill="none" stroke="#f2f2f2" stroke-width="1.6"/>
<g stroke="#f2f2f2" stroke-width="1.3" fill="none"><rect x="366.5" y="699.5" width="9.5" height="9.5"/><path d="M364.5 697.2 L378 697.2 M364.5 711.3 L378 711.3"/></g>
<circle cx="411.8" cy="704" r="10" fill="#1d86d6"/>
<path d="M402.5 706 Q403 695 413 694.5 Q421.5 695 421.5 703.5 L408 703.5 Q408.5 710 415.5 710.5 Q419.5 710.5 421 708.5 Q418 714 411 713.8 Q402.5 713 402.5 706 Z" fill="#4fd08a"/>
<path d="M408 703.5 Q409 698.5 414.5 699 Q418 699.5 418.5 703.5 Z" fill="#1d86d6"/>
<path d="M441 698.5 L461 698.5 L461 711.5 L441 711.5 Z" fill="#0f74c8"/><path d="M441 698.5 L451 706.5 L461 698.5 Z" fill="#50b0f0"/>
<rect x="481" y="697" width="19" height="16" rx="1" fill="#f2f2f2"/><path d="M486 697 Q486 692 490.5 692 Q495 692 495 697" stroke="#f2f2f2" stroke-width="1.3" fill="none"/>
<rect x="487" y="701" width="3.3" height="3.3" fill="#f25022"/><rect x="491" y="701" width="3.3" height="3.3" fill="#7fba00"/><rect x="487" y="705" width="3.3" height="3.3" fill="#00a4ef"/><rect x="491" y="705" width="3.3" height="3.3" fill="#ffb900"/>
<path d="M520 697 L527 697 L529 699 L538 699 L538 712 L520 712 Z" fill="#e2ac30"/><rect x="520" y="702" width="18" height="10" fill="#f6d068"/><rect x="526" y="706" width="6" height="4" fill="#3a8ad8"/>
<circle cx="568.8" cy="704" r="10" fill="#db4437"/>
<path d="M568.8 704 L560.1 699 A10 10 0 0 0 563.8 712.7 Z" fill="#0f9d58"/>
<path d="M568.8 704 L563.8 712.7 A10 10 0 0 0 578.5 699 Z" fill="#f4b400"/>
<circle cx="568.8" cy="704" r="4.6" fill="#fff"/><circle cx="568.8" cy="704" r="3.6" fill="#4285f4"/>
<rect x="589" y="688" width="37.5" height="32" fill="#454a42"/>
<rect x="598" y="694" width="21" height="20" fill="#f2f2f2"/>
<path d="M601.5 712 L607 696 L610 696 L615.5 712 L612.8 712 L608.5 700 L604.2 712 Z M604 707.5 L612 704.5 L612.6 706.8 L604.6 709.8 Z" fill="#c8202a"/>
<circle cx="647" cy="704" r="9.3" fill="#f2f2f2"/><circle cx="647" cy="704" r="7.8" fill="#141414"/><circle cx="647" cy="704" r="5.8" fill="#e82020"/>
<rect x="553" y="718.3" width="31" height="1.7" fill="#8ab8e8"/>
<rect x="589" y="718.3" width="37.5" height="1.7" fill="#8ab8e8"/>
<rect x="631" y="718.3" width="31" height="1.7" fill="#8ab8e8"/>
</svg><svg class="a" style="left:1078px;top:692px" width="202" height="28" viewBox="1078 692 202 28">
<g stroke="#f0f0f0" stroke-width="1.2" fill="none">
<path d="M1081 706.3 L1085.8 701.5 L1090.5 706.3"/>
<rect x="1102.5" y="702.5" width="8" height="5"/><path d="M1099.5 699.5 L1099.5 707.5 M1098 699.5 L1098 702.5 L1101 702.5 L1101 699.5 M1104.5 703.5 L1108 706.5 M1108 703.5 L1104.5 706.5"/>
<path d="M1117.5 701.5 L1120.5 701.5 L1124.5 698.5 L1124.5 708.5 L1120.5 705.5 L1117.5 705.5 Z M1126.5 701.5 Q1128 703.5 1126.5 705.5 M1128.5 699.5 Q1131 703.5 1128.5 707.5"/>
<path d="M1139.5 709 Q1139.5 701 1148.5 699.8 M1142.3 709 Q1142.3 704 1148.5 703.3 M1145 709 Q1145 706.5 1148.5 706.3"/>
<path d="M1247.5 697.5 L1260 697.5 L1260 708 L1254.5 708 L1253 710.5 L1251.5 708 L1247.5 708 Z"/>
</g>
<circle cx="1149" cy="708.5" r="0.9" fill="#f0f0f0"/>
<rect x="1275.7" y="692" width="1" height="28" fill="#6a7066"/>
</svg><div class="a" style="left:1157.80px;top:699.87px;font-size:10.2px;color:#f0f0f0;transform:scaleX(0.8153);transform-origin:0 0;">ENG</div>
<div class="a" style="left:1192.70px;top:692.67px;font-size:10.2px;color:#f0f0f0;transform:scaleX(0.8748);transform-origin:0 0;">8:19 PM</div>
<div class="a" style="left:1186.50px;top:706.87px;font-size:10.2px;color:#f0f0f0;transform:scaleX(0.9000);transform-origin:0 0;">20/12/2024</div>
<div class="a" style="left:380px;top:164px;width:520px;height:354px;background:#f0f0f0;box-shadow:0 0 5px 2px rgba(0,0,0,0.35)"></div><div class="a" style="left:380px;top:164px;width:520px;height:354px;background:#f0f0f0"></div><div class="a" style="left:900.2px;top:281.5px;width:2.6px;height:16.6px;background:#8e9296;border-radius:1px;box-shadow:0 0 0 0.6px #111"></div><div class="a" style="left:380px;top:164px;width:520px;height:24px;background:#ffffff"></div><svg class="a" style="left:387px;top:169px" width="13" height="14" viewBox="387 169 13 14">
<path d="M388 180.8 L392 170 L395.2 170 L399 180.8 L396.2 180.8 L393.6 173.4 L390.8 180.8 Z M390.8 177.6 L397 175.2 L397.6 177.2 L391.4 179.6 Z" fill="#b8222a"/><path d="M393 172 L394 172 L393.2 175 Z" fill="#e06060"/>
</svg><div class="a" style="left:403.60px;top:170.92px;font-size:10.5px;color:#1a1a1a;transform:scaleX(0.8767);transform-origin:0 0;">Data Extraction - Select Properties (Page 4 of 8)</div>
<div class="a" style="left:808px;top:175px;width:8px;height:1px;background:#cfcfcf"></div><div class="a" style="left:840.2px;top:170.8px;width:9.2px;height:9.2px;border:1px solid #262626"></div><svg class="a" style="left:876px;top:170px" width="12" height="12" viewBox="876 170 12 12"><path d="M877 171 L886 180 M886 171 L877 180" stroke="#262626" stroke-width="1"/></svg><div class="a" style="left:388.90px;top:203.23px;font-size:9.2px;color:#1c1c1c;transform:scaleX(0.9631);transform-origin:0 0;">The following properties were found based on the objects you selected.</div>
<div class="a" style="left:388.90px;top:222.43px;font-size:9.2px;color:#1c1c1c;transform:scaleX(0.9598);transform-origin:0 0;">Select the properties you want to extract.</div>
<div class="a" style="left:388.90px;top:234.63px;font-size:9.2px;color:#1c1c1c;transform:scaleX(0.9762);transform-origin:0 0;">(Explore the right-click menu for additional options.)</div>
<div class="a" style="left:390.3px;top:258.7px;width:377px;height:214.5px;border:1px solid #dcdcdc"></div><div class="a" style="left:395px;top:254px;width:42px;height:9px;background:#f0f0f0"></div><div class="a" style="left:396.90px;top:255.26px;font-size:9.6px;color:#1c1c1c;transform:scaleX(0.8506);transform-origin:0 0;">Properties</div>
<div class="a" style="left:393.3px;top:267.3px;width:371.5px;height:204px;background:#ffffff;border:1px solid #1e1e1e"></div><div class="a" style="left:410px;top:268.3px;width:1px;height:192px;background:#cacaca"></div><div class="a" style="left:490px;top:268.3px;width:1px;height:192px;background:#cacaca"></div><div class="a" style="left:570.2px;top:268.3px;width:1px;height:192px;background:#cacaca"></div><div class="a" style="left:417.10px;top:272.10px;font-size:10px;color:#1c1c1c;transform:scaleX(0.7990);transform-origin:0 0;">Property</div>
<svg class="a" style="left:480px;top:274px" width="9" height="6" viewBox="480 274 9 6"><path d="M480.8 279.2 L484.5 275 L488.2 279.2 Z" fill="#a8a8a8"/></svg><div class="a" style="left:496.90px;top:272.10px;font-size:10px;color:#1c1c1c;transform:scaleX(0.8209);transform-origin:0 0;">Display Name</div>
<div class="a" style="left:576.00px;top:272.10px;font-size:10px;color:#1c1c1c;transform:scaleX(0.8379);transform-origin:0 0;">Category</div>
<div class="a" style="left:394.3px;top:284.50px;width:355.7px;height:1px;background:#c6c6c6"></div><div class="a" style="left:397px;top:288.10px;width:10.3px;height:10.3px;border:1px solid #727272;background:#fff"></div><div class="a" style="left:413.60px;top:290.10px;font-size:10px;color:#1c1c1c;transform:scaleX(0.8433);transform-origin:0 0;">Position Z</div>
<div class="a" style="left:493.70px;top:290.10px;font-size:10px;color:#1c1c1c;transform:scaleX(0.8433);transform-origin:0 0;">Position Z</div>
<div class="a" style="left:573.40px;top:290.10px;font-size:10px;color:#1c1c1c;transform:scaleX(0.8154);transform-origin:0 0;">Geometry</div>
<div class="a" style="left:394.3px;top:302.05px;width:355.7px;height:1px;background:#c6c6c6"></div><div class="a" style="left:397px;top:305.65px;width:10.3px;height:10.3px;border:1px solid #727272;background:#fff"></div><div class="a" style="left:413.60px;top:307.65px;font-size:10px;color:#1c1c1c;transform:scaleX(0.8456);transform-origin:0 0;">Rotation</div>
<div class="a" style="left:493.70px;top:307.65px;font-size:10px;color:#1c1c1c;transform:scaleX(0.8456);transform-origin:0 0;">Rotation</div>
<div class="a" style="left:573.40px;top:307.65px;font-size:10px;color:#1c1c1c;transform:scaleX(0.8886);transform-origin:0 0;">Text</div>
<div class="a" style="left:394.3px;top:319.60px;width:355.7px;height:1px;background:#c6c6c6"></div><div class="a" style="left:397px;top:323.20px;width:10.3px;height:10.3px;border:1px solid #727272;background:#fff"></div><div class="a" style="left:413.60px;top:325.20px;font-size:10px;color:#1c1c1c;transform:scaleX(0.7961);transform-origin:0 0;">Style</div>
<div class="a" style="left:493.70px;top:325.20px;font-size:10px;color:#1c1c1c;transform:scaleX(0.7961);transform-origin:0 0;">Style</div>
<div class="a" style="left:573.40px;top:325.20px;font-size:10px;color:#1c1c1c;transform:scaleX(0.8886);transform-origin:0 0;">Text</div>
<div class="a" style="left:394.3px;top:337.15px;width:355.7px;height:1px;background:#c6c6c6"></div><div class="a" style="left:397px;top:340.75px;width:10.3px;height:10.3px;border:1px solid #727272;background:#fff"></div><div class="a" style="left:413.60px;top:342.75px;font-size:10px;color:#1c1c1c;transform:scaleX(0.8543);transform-origin:0 0;">Subject</div>
<div class="a" style="left:493.70px;top:342.75px;font-size:10px;color:#1c1c1c;transform:scaleX(0.8543);transform-origin:0 0;">Subject</div>
<div class="a" style="left:573.40px;top:342.75px;font-size:10px;color:#1c1c1c;transform:scaleX(0.8341);transform-origin:0 0;">Drawing</div>
<div class="a" style="left:394.3px;top:354.70px;width:355.7px;height:1px;background:#c6c6c6"></div><div class="a" style="left:397px;top:358.30px;width:10.3px;height:10.3px;border:1px solid #727272;background:#fff"></div><div class="a" style="left:413.60px;top:360.30px;font-size:10px;color:#1c1c1c;transform:scaleX(0.8575);transform-origin:0 0;">Thickness</div>
<div class="a" style="left:493.70px;top:360.30px;font-size:10px;color:#1c1c1c;transform:scaleX(0.8575);transform-origin:0 0;">Thickness</div>
<div class="a" style="left:573.40px;top:360.30px;font-size:10px;color:#1c1c1c;transform:scaleX(0.8886);transform-origin:0 0;">Text</div>
<div class="a" style="left:394.3px;top:372.25px;width:355.7px;height:1px;background:#c6c6c6"></div><div class="a" style="left:397px;top:375.85px;width:10.3px;height:10.3px;border:1px solid #727272;background:#fff"></div><div class="a" style="left:413.60px;top:377.85px;font-size:10px;color:#1c1c1c;transform:scaleX(0.8472);transform-origin:0 0;">Title</div>
<div class="a" style="left:493.70px;top:377.85px;font-size:10px;color:#1c1c1c;transform:scaleX(0.8472);transform-origin:0 0;">Title</div>
<div class="a" style="left:573.40px;top:377.85px;font-size:10px;color:#1c1c1c;transform:scaleX(0.8341);transform-origin:0 0;">Drawing</div>
<div class="a" style="left:394.3px;top:389.80px;width:355.7px;height:1px;background:#c6c6c6"></div><div class="a" style="left:397px;top:393.40px;width:10.3px;height:10.3px;border:1px solid #727272;background:#fff"></div><div class="a" style="left:413.60px;top:395.40px;font-size:10px;color:#1c1c1c;transform:scaleX(0.8551);transform-origin:0 0;">Total Editing Time</div>
<div class="a" style="left:493.70px;top:395.40px;font-size:10px;color:#1c1c1c;transform:scaleX(0.8551);transform-origin:0 0;">Total Editing Time</div>
<div class="a" style="left:573.40px;top:395.40px;font-size:10px;color:#1c1c1c;transform:scaleX(0.8341);transform-origin:0 0;">Drawing</div>
<div class="a" style="left:394.3px;top:407.35px;width:355.7px;height:1px;background:#c6c6c6"></div><div class="a" style="left:397px;top:410.95px;width:10.3px;height:10.3px;border:1px solid #727272;background:#fff"></div><div class="a" style="left:413.60px;top:412.95px;font-size:10px;color:#1c1c1c;transform:scaleX(0.8574);transform-origin:0 0;">Value</div>
<div class="a" style="left:493.70px;top:412.95px;font-size:10px;color:#1c1c1c;transform:scaleX(0.8574);transform-origin:0 0;">Value</div>
<div class="a" style="left:573.40px;top:412.95px;font-size:10px;color:#1c1c1c;transform:scaleX(0.8886);transform-origin:0 0;">Text</div>
<div class="a" style="left:394.3px;top:424.90px;width:355.7px;height:1px;background:#c6c6c6"></div><div class="a" style="left:397px;top:428.50px;width:10.3px;height:10.3px;border:1px solid #727272;background:#fff"></div><div class="a" style="left:413.60px;top:430.50px;font-size:10px;color:#1c1c1c;transform:scaleX(0.8275);transform-origin:0 0;">VisualStyleId</div>
<div class="a" style="left:493.70px;top:430.50px;font-size:10px;color:#1c1c1c;transform:scaleX(0.8275);transform-origin:0 0;">VisualStyleId</div>
<div class="a" style="left:573.40px;top:430.50px;font-size:10px;color:#1c1c1c;transform:scaleX(0.8318);transform-origin:0 0;">3D Visualization</div>
<div class="a" style="left:394.3px;top:442.45px;width:355.7px;height:1px;background:#c6c6c6"></div><div class="a" style="left:397px;top:446.05px;width:10.3px;height:10.3px;border:1px solid #727272;background:#fff"></div><div class="a" style="left:413.60px;top:448.05px;font-size:10px;color:#1c1c1c;transform:scaleX(0.8609);transform-origin:0 0;">Width Factor</div>
<div class="a" style="left:493.70px;top:448.05px;font-size:10px;color:#1c1c1c;transform:scaleX(0.8609);transform-origin:0 0;">Width Factor</div>
<div class="a" style="left:573.40px;top:448.05px;font-size:10px;color:#1c1c1c;transform:scaleX(0.8886);transform-origin:0 0;">Text</div>
<div class="a" style="left:394.3px;top:460px;width:355.7px;height:1px;background:#c6c6c6"></div><div class="a" style="left:394.3px;top:461px;width:355.7px;height:9px;background:#b1b1b1"></div><div class="a" style="left:750px;top:268.3px;width:13.8px;height:202.2px;background:#f0f0f0"></div><div class="a" style="left:752px;top:405px;width:10.7px;height:52px;background:#cdcdcd"></div><svg class="a" style="left:751px;top:270px" width="12" height="10" viewBox="751 270 12 10"><path d="M753.5 277 L757 273.5 L760.5 277" stroke="#5a5a5a" stroke-width="1.3" fill="none"/></svg><svg class="a" style="left:751px;top:459px" width="12" height="10" viewBox="751 459 12 10"><path d="M753.5 462 L757 465.5 L760.5 462" stroke="#5a5a5a" stroke-width="1.3" fill="none"/></svg><svg class="a" style="left:415px;top:433px" width="12" height="18" viewBox="0 0 12 18"><path d="M1.5 1.5 L1.5 14 L4.5 11.2 L6.8 16.2 L8.6 15.4 L6.4 10.6 L10.4 10.6 Z" fill="#fff" stroke="#111" stroke-width="1" stroke-linejoin="round"/></svg><div class="a" style="left:773px;top:258.7px;width:116px;height:215.5px;border:1px solid #dcdcdc"></div><div class="a" style="left:778px;top:254px;width:55px;height:9px;background:#f0f0f0"></div><div class="a" style="left:779.70px;top:255.36px;font-size:9.6px;color:#1c1c1c;transform:scaleX(0.8574);transform-origin:0 0;">Category filter</div>
<div class="a" style="left:776.2px;top:267.5px;width:110px;height:195px;background:#ffffff;border:1px solid #a8a8a8"></div><svg class="a" style="left:778px;top:269.40px" width="12" height="11" viewBox="0 0 12 11"><rect x="0.8" y="0.5" width="10" height="9.8" fill="#fff" stroke="#3a3a3a" stroke-width="1"/><path d="M2.6 5.2 L4.8 7.8 L9.2 2.6" stroke="#1a1a1a" stroke-width="1.1" fill="none"/></svg><div class="a" style="left:792.20px;top:269.66px;font-size:9.6px;color:#1c1c1c;transform:scaleX(0.9326);transform-origin:0 0;">3D Visualization</div>
<svg class="a" style="left:778px;top:281.15px" width="12" height="11" viewBox="0 0 12 11"><rect x="0.8" y="0.5" width="10" height="9.8" fill="#fff" stroke="#3a3a3a" stroke-width="1"/><path d="M2.6 5.2 L4.8 7.8 L9.2 2.6" stroke="#1a1a1a" stroke-width="1.1" fill="none"/></svg><div class="a" style="left:792.20px;top:281.41px;font-size:9.6px;color:#1c1c1c;transform:scaleX(0.9175);transform-origin:0 0;">Drawing</div>
<svg class="a" style="left:778px;top:292.90px" width="12" height="11" viewBox="0 0 12 11"><rect x="0.8" y="0.5" width="10" height="9.8" fill="#fff" stroke="#3a3a3a" stroke-width="1"/><path d="M2.6 5.2 L4.8 7.8 L9.2 2.6" stroke="#1a1a1a" stroke-width="1.1" fill="none"/></svg><div class="a" style="left:792.20px;top:293.16px;font-size:9.6px;color:#1c1c1c;transform:scaleX(0.9139);transform-origin:0 0;">General</div>
<svg class="a" style="left:778px;top:304.65px" width="12" height="11" viewBox="0 0 12 11"><rect x="0.8" y="0.5" width="10" height="9.8" fill="#fff" stroke="#3a3a3a" stroke-width="1"/><path d="M2.6 5.2 L4.8 7.8 L9.2 2.6" stroke="#1a1a1a" stroke-width="1.1" fill="none"/></svg><div class="a" style="left:792.20px;top:304.91px;font-size:9.6px;color:#1c1c1c;transform:scaleX(0.9211);transform-origin:0 0;">Geometry</div>
<svg class="a" style="left:778px;top:316.40px" width="12" height="11" viewBox="0 0 12 11"><rect x="0.8" y="0.5" width="10" height="9.8" fill="#fff" stroke="#3a3a3a" stroke-width="1"/><path d="M2.6 5.2 L4.8 7.8 L9.2 2.6" stroke="#1a1a1a" stroke-width="1.1" fill="none"/></svg><div class="a" style="left:792.20px;top:316.66px;font-size:9.6px;color:#1c1c1c;transform:scaleX(0.9995);transform-origin:0 0;">Text</div>
<div class="a" style="left:383px;top:480px;width:514px;height:1px;background:#dcdcdc"></div><div class="a" style="left:701px;top:489px;width:57.8px;height:16.6px;background:#e1e1e1;border:1px solid #adadad"></div><div class="a" style="left:766px;top:489px;width:57.8px;height:16.6px;background:#cccccc;border:1px solid #c2c2c2"></div><div class="a" style="left:830px;top:489px;width:58.5px;height:16.6px;background:#e1e1e1;border:2px solid #2f6fae"></div><div class="a" style="left:717.50px;top:493.46px;font-size:9.6px;color:#1c1c1c;transform:scaleX(0.8511);transform-origin:0 0;">&lt; Back</div>
<div class="a" style="left:780.00px;top:493.46px;font-size:9.6px;color:#8c8c8c;transform:scaleX(0.9643);transform-origin:0 0;">Next &gt;</div>
<div class="a" style="left:845.80px;top:493.46px;font-size:9.6px;color:#1c1c1c;transform:scaleX(0.8669);transform-origin:0 0;">Cancel</div>
<svg class="a" style="left:891px;top:509px" width="8" height="8" viewBox="0 0 8 8"><g fill="#b4b4b4"><rect x="6" y="1" width="1" height="1"/><rect x="4" y="3" width="1" height="1"/><rect x="6" y="3" width="1" height="1"/><rect x="2" y="5" width="1" height="1"/><rect x="4" y="5" width="1" height="1"/><rect x="6" y="5" width="1" height="1"/></g></svg></body></html>
